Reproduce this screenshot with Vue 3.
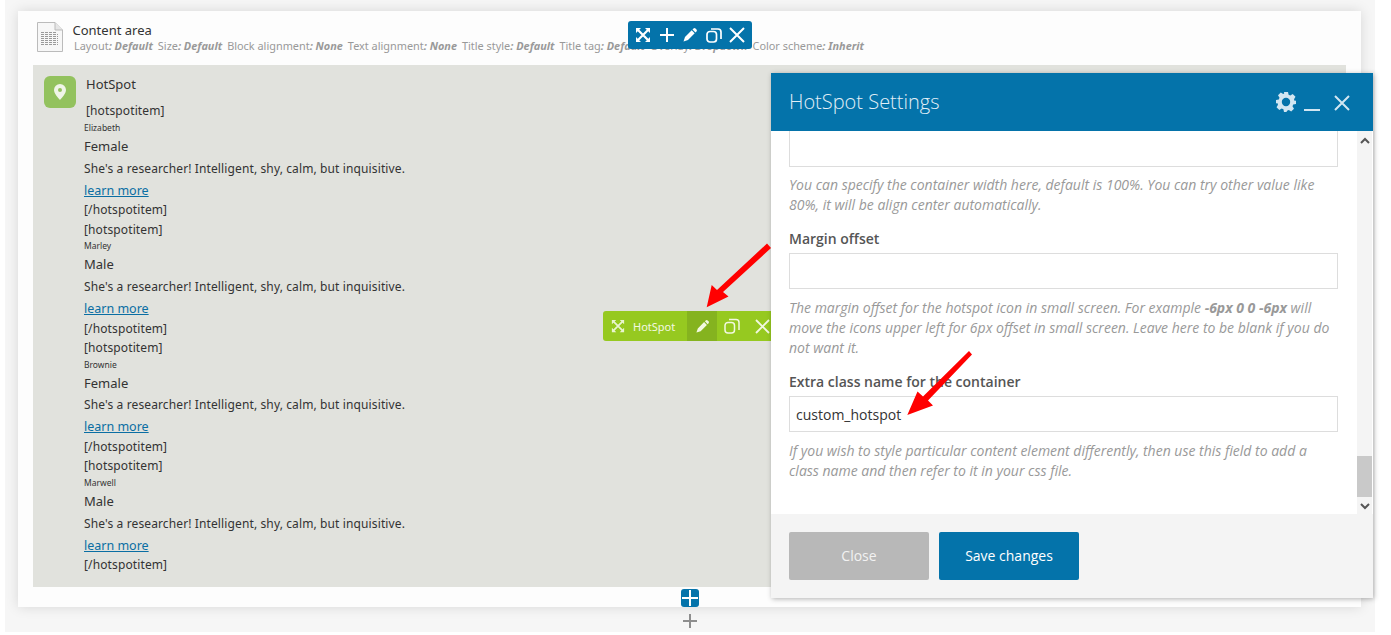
<script setup>
const meta = [
  ['Layout', 'Default'], ['Size', 'Default'], ['Block alignment', 'None'], ['Text alignment', 'None'],
  ['Title style', 'Default'], ['Title tag', 'Default'], ['Overlay', 'Dropdown'], ['Color scheme', 'Inherit'],
]
const items = [
  { name: 'Elizabeth', gender: 'Female' },
  { name: 'Marley', gender: 'Male' },
  { name: 'Brownie', gender: 'Female' },
  { name: 'Marwell', gender: 'Male' },
]
</script>

<template>
  <div class="page">
    <div class="stage">
      <section class="card">
        <header class="area-head">
          <svg class="doc" width="26" height="31" viewBox="0 0 26 31">
            <path d="M.5.500H18L25.500 8V29.500H.5Z" fill="#f7f7f7" stroke="#bbb" />
            <path d="M18 .5V8H25.500" fill="#e6e6e6" stroke="#bbb" />
            <path d="M4 10.500H20M4 12.500H21M4 14.500H21M4 16.500H21M4 18.500H21M4 20.500H21M4 22.500H21" stroke="#9a9a9a" stroke-dasharray="3 1" />
          </svg>
          <div class="area-text">
            <div class="area-title">Content area</div>
            <div class="meta">
              <span v-for="m in meta" :key="m[0]">{{ m[0] }}<b>: {{ m[1] }}</b></span>
            </div>
          </div>
        </header>
        <div class="block">
          <div class="pin">
            <svg width="12" height="16" viewBox="0 0 12 16">
              <path fill-rule="evenodd" d="M6 0a6 6 0 0 1 6 6c0 3.500-4 7.500-6 10C4 13.500 0 9.500 0 6a6 6 0 0 1 6-6Zm0 4a2 2 0 1 0 0 4 2 2 0 0 0 0-4Z" fill="#f0f5e8" />
            </svg>
          </div>
          <div class="hs-body">
            <div class="hs-title">HotSpot</div>
            <div class="hs-list">
              <div v-for="(it, i) in items" :key="it.name" class="item" :class="'item' + i">
                <div class="tag">[hotspotitem]</div>
                <div class="name">{{ it.name }}</div>
                <div class="gender">{{ it.gender }}</div>
                <div class="desc">She's a researcher! Intelligent, shy, calm, but inquisitive.</div>
                <a class="more">learn more</a>
                <div class="tag close">[/hotspotitem]</div>
              </div>
            </div>
          </div>
        </div>
      </section>
      <div class="add-row">
        <svg width="14" height="14" viewBox="0 0 14 14"><path d="M7 0V14M0 7H14" stroke="#8e8e8e" stroke-width="2" /></svg>
      </div>
    </div>

    <div class="toolbar blue">
      <svg width="16" height="16" viewBox="0 0 16 16" fill="#fff" stroke="#fff">
        <path d="M1 1H6L1 6ZM15 1V6L10 1ZM15 15H10L15 10ZM1 15V10L6 15Z" stroke="none" />
        <path d="M3 3L13 13M13 3L3 13" stroke-width="2.200" />
      </svg>
      <svg width="16" height="16" viewBox="0 0 16 16"><path d="M8 1V15M1 8H15" stroke="#fff" stroke-width="2" /></svg>
      <svg width="16" height="16" viewBox="0 0 16 16" fill="#fff">
        <path d="M11.500 1.500a1.500 1.500 0 0 1 2 0l1 1a1.500 1.500 0 0 1 0 2L13.500 5.500 10.500 2.500ZM9.700 3.300l3 3L6 13l-4.500 1.500L3 10Z" />
      </svg>
      <svg width="16" height="16" viewBox="0 0 16 16" fill="none" stroke="#fff" stroke-width="1.700">
        <rect x="1" y="4.500" width="9.500" height="10.500" rx="3" />
        <path d="M5 2h7a3 3 0 0 1 3 3v7" />
      </svg>
      <svg width="16" height="16" viewBox="0 0 16 16"><path d="M1 1L15 15M15 1L1 15" stroke="#fff" stroke-width="2" /></svg>
    </div>

    <div class="toolbar green">
      <span class="g-label">
        <svg width="14" height="14" viewBox="0 0 16 16" fill="#e9f5cf" stroke="#e9f5cf">
          <path d="M1 1H6L1 6ZM15 1V6L10 1ZM15 15H10L15 10ZM1 15V10L6 15Z" stroke="none" />
          <path d="M3 3L13 13M13 3L3 13" stroke-width="2" />
        </svg>
        HotSpot
      </span>
      <span class="g-btn active">
        <svg width="15" height="15" viewBox="0 0 16 16" fill="#f2f8e0">
          <path d="M11.500 1.500a1.500 1.500 0 0 1 2 0l1 1a1.500 1.500 0 0 1 0 2L13.500 5.500 10.500 2.500ZM9.700 3.300l3 3L6 13l-4.500 1.500L3 10Z" />
        </svg>
      </span>
      <span class="g-btn">
        <svg width="16" height="16" viewBox="0 0 16 16" fill="none" stroke="#f2f8e0" stroke-width="1.500"><rect x="1" y="4.500" width="9.500" height="10.500" rx="3" /><path d="M5 1.500h7a3 3 0 0 1 3 3v7.500" /></svg>
      </span>
      <span class="g-btn">
        <svg width="15" height="15" viewBox="0 0 15 15"><path d="M1 1L14 14M14 1L1 14" stroke="#f2f8e0" stroke-width="1.800" /></svg>
      </span>
    </div>

    <div class="plus-blue">
      <svg width="18" height="18" viewBox="0 0 18 18"><path d="M9 1V17M1 9H17" stroke="#fff" stroke-width="2" /></svg>
    </div>

    <aside class="modal">
      <header class="m-head">
        <h2>HotSpot Settings</h2>
        <div class="m-icons">
          <svg width="22" height="22" viewBox="0 0 22 22">
            <path fill="#d2e6f2" fill-rule="evenodd" d="M9 1h4l.6 2.800 1.700.7 2.400-1.500 2.800 2.800-1.500 2.400.7 1.700L21 9.500v3.500l-2.800.6-.7 1.700 1.500 2.400-2.800 2.800-2.400-1.500-1.700.7L11.500 21H9l-.6-2.800-1.700-.7-2.400 1.500-2.800-2.800 1.500-2.400-.7-1.700L1 12.500V9l2.800-.6.700-1.700L3 4.300 5.800 1.500l2.400 1.500 1-.4ZM11 6.800a4.200 4.200 0 1 0 0 8.400 4.200 4.200 0 0 0 0-8.400Z" />
          </svg>
          <span class="minimize"></span>
          <svg class="m-x" width="16" height="16" viewBox="0 0 16 16"><path d="M1 1L15 15M15 1L1 15" stroke="#d2e6f2" stroke-width="2" /></svg>
        </div>
      </header>
      <div class="m-scroll">
        <div class="m-body">
          <div class="input first"></div>
          <p class="hint hint-first">You can specify the container width here, default is 100%. You can try other value like 80%, it will be align center automatically.</p>
          <label class="lbl">Margin offset</label>
          <div class="input"></div>
          <p class="hint">The margin offset for the hotspot icon in small screen. For example <b>-6px 0 0 -6px</b> will move the icons upper left for 6px offset in small screen. Leave here to be blank if you do not want it.</p>
          <label class="lbl">Extra class name for the container</label>
          <div class="input filled">custom_hotspot</div>
          <p class="hint">If you wish to style particular content element differently, then use this field to add a class name and then refer to it in your css file.</p>
        </div>
        <div class="scrollbar">
          <svg width="10" height="8" viewBox="0 0 10 8"><path d="M1 6L5 2L9 6" fill="none" stroke="#555" stroke-width="2" /></svg>
          <div class="track"><div class="thumb"></div></div>
          <svg width="10" height="8" viewBox="0 0 10 8"><path d="M1 2L5 6L9 2" fill="none" stroke="#555" stroke-width="2" /></svg>
        </div>
      </div>
      <footer class="m-foot">
        <button class="btn grey">Close</button>
        <button class="btn blue-btn">Save changes</button>
      </footer>
    </aside>

    <svg class="arrows" width="1391" height="635" viewBox="0 0 1391 635">
      <g fill="#f00" stroke="none">
        <path d="M706.700 307.300L711.700 285 717 290 767 243.500 771 248 723 292 728.500 296.500Z" />
        <path d="M907.300 415L917.500 391.500 923 396.500 969 351 972 354.500 928 400.500 933 405.500Z" />
      </g>
    </svg>
  </div>
</template>

<style>
html, body { margin: 0; background: #fff; }
</style>

<style scoped>
.page {
  position: relative;
  width: 1391px;
  height: 635px;
  overflow: hidden;
  background: #fff;
  font-family: "Noto Sans", "Open Sans", sans-serif;
  color: #333;
}
.stage {
  width: 1370px;
  height: 632px;
  margin-left: 5px;
  padding: 11px 14px 0 13px;
  box-sizing: border-box;
  background: #f6f6f6;
  overflow: hidden;
}
.card {
  height: 596px;
  background: #fdfdfd;
  padding: 0 15px;
  box-sizing: border-box;
  box-shadow: 0 0 12px rgba(0, 0, 0, .13);
}
.area-head {
  height: 54px;
  display: flex;
  gap: 10px;
  padding: 11px 0 0 4px;
  box-sizing: border-box;
}
.area-title { font-size: 13px; line-height: 17px; color: #333; margin-left: -0.500px; }
.meta { display: flex; gap: 5px; font-size: 10.900px; line-height: 14px; color: #999; margin: 0 0 0 1px; white-space: nowrap; }
.meta b { font-style: italic; color: #999; }
.block {
  height: 522px;
  background: #e1e2dd;
  padding: 11px 11px 0;
  box-sizing: border-box;
  display: flex;
  gap: 8px;
}
.pin {
  width: 32px;
  height: 32px;
  border-radius: 6px;
  background: #93c25e;
  display: flex;
  align-items: center;
  justify-content: center;
}
.hs-body { font-size: 12px; color: #333; margin-top: -1px; }
.hs-title { font-size: 13px; line-height: 18px; margin: 0 0 0 2px; color: #333; }
.hs-list { margin-top: 10.400px; }
.item { height: 118.300px; }
.tag { font-size: 12px; line-height: 16px; letter-spacing: .12px; }
.item0 .tag:first-child { margin-left: 2px; }
.item .close { margin-top: 3.500px; }
.name { font-size: 8.500px; line-height: 12px; margin-top: 2.600px; }
.gender { font-size: 13px; line-height: 18px; margin-top: 3px; }
.desc { font-size: 12px; line-height: 16px; margin-top: 5.900px; letter-spacing: .12px; }
.more { display: block; font-size: 12.500px; line-height: 17px; margin-top: 5px; color: #0a6ea3; text-decoration: underline; }
.add-row { display: flex; justify-content: center; padding-top: 7px; }

.toolbar { position: absolute; display: flex; align-items: center; color: #fff; }
.toolbar.blue { left: 628px; top: 21px; width: 124px; height: 28px; background: #0473aa; border-radius: 3px; gap: 7.500px; padding: 0 0 0 7px; box-sizing: border-box; }
.toolbar.green { left: 603px; top: 311px; height: 30px; width: 168px; background: #96c920; border-radius: 3px 0 0 3px; font-size: 11px; overflow: hidden; }
.g-label { display: flex; align-items: center; gap: 8px; width: 84px; flex: none; padding-left: 8px; box-sizing: border-box; color: #f3f8e2; }
.g-btn { width: 30px; height: 30px; display: flex; align-items: center; justify-content: center; flex: none; }
.g-btn.active { background: #85b31f; }
.plus-blue {
  position: absolute; left: 681px; top: 589px; width: 18px; height: 18px;
  background: #0473aa; border-radius: 3px; display: flex;
}
.modal {
  position: absolute; left: 771px; top: 73px; width: 602px; height: 525px;
  background: #fff; display: flex; flex-direction: column;
  box-shadow: 1px 1px 5px rgba(0, 0, 0, .3);
  font-family: "Open Sans", sans-serif;
}
.m-head { height: 58px; flex: none; background: #0473aa; display: flex; align-items: center; justify-content: space-between; padding: 0 23px 2px 18px; box-sizing: border-box; }
.m-head h2 { margin: 0; font-size: 20px; font-weight: 300; color: #e2eff7; }
.m-icons { display: flex; align-items: center; margin-top: 1px; }
.minimize { width: 16px; height: 2.500px; background: #d2e6f2; margin: 17px 14px 0 7px; }
.m-x { margin-top: 2px; }
.m-scroll { flex: 1; display: flex; min-height: 0; overflow: hidden; }
.m-body { flex: 1; padding: 0 19px 0 18px; min-width: 0; }
.scrollbar { width: 15px; margin-right: 1px; display: flex; flex-direction: column; align-items: center; background: #f4f4f4; padding-top: 6px; box-sizing: border-box; }
.track { flex: 1; width: 100%; display: flex; flex-direction: column; justify-content: flex-end; }
.thumb { height: 41px; background: #c9c9c9; margin-bottom: 5px; }
.scrollbar svg:last-child { margin-bottom: 4px; }
.input { height: 36px; border: 1px solid #ddd; box-sizing: border-box; font-size: 14px; line-height: 35px; padding: 0 6px; color: #333; }
.input.first { border-top: 0; }
.input.filled { margin-top: 0; line-height: 36px; }
.hint { margin: 9px 0 14px; font-size: 14px; line-height: 20px; font-style: italic; color: #999; }
.hint-first { margin-top: 8px; }
.hint b { font-weight: 700; }
.lbl { display: block; font-size: 14px; font-weight: 600; line-height: 20px; color: #555; margin-bottom: 4px; }
.m-foot { height: 84px; flex: none; background: #f4f4f4; display: flex; gap: 10px; padding: 18px 18px 0; box-sizing: border-box; }
.btn { height: 48px; border: 0; border-radius: 2px; font-family: "Open Sans", sans-serif; font-size: 14px; color: #fff; padding: 0 0 2px; }
.btn.grey { width: 140px; background: #b8b8b8; color: #f2f2f2; }
.btn.blue-btn { width: 140px; background: #0473aa; }
.arrows { position: absolute; left: 0; top: 0; pointer-events: none; }
</style>
